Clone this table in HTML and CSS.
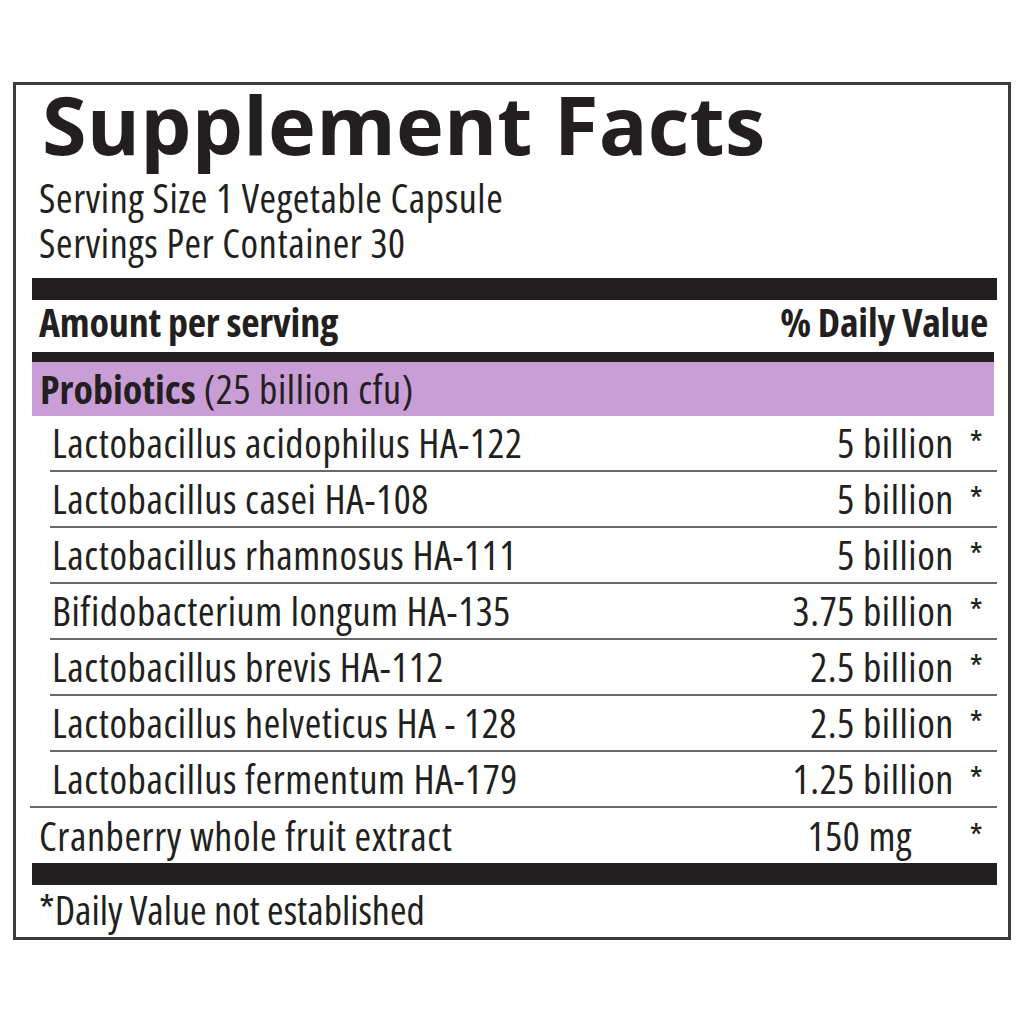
FILE: index.html
```html
<!DOCTYPE html>
<html lang="en">
<head>
<meta charset="utf-8">
<title>Supplement Facts</title>
<link rel="stylesheet" href="styles.css">
</head>
<body>
<section class="facts">
  <h1 class="title">Supplement Facts</h1>
  <div class="serving">
    <div>Serving Size 1 Vegetable Capsule</div>
    <div>Servings Per Container 30</div>
  </div>
  <div class="bar bar-thick"></div>
  <div class="head">
    <span>Amount per serving</span>
    <span>% Daily Value</span>
  </div>
  <div class="bar bar-mid"></div>
  <div class="group"><b>Probiotics</b> (25 billion cfu)</div>
  <div class="rows">
    <div class="row sub"><span class="name">Lactobacillus acidophilus HA-122</span><span class="amt">5 billion</span><span class="star">*</span></div>
    <div class="row sub"><span class="name">Lactobacillus casei HA-108</span><span class="amt">5 billion</span><span class="star">*</span></div>
    <div class="row sub"><span class="name">Lactobacillus rhamnosus HA-111</span><span class="amt">5 billion</span><span class="star">*</span></div>
    <div class="row sub"><span class="name">Bifidobacterium longum HA-135</span><span class="amt">3.75 billion</span><span class="star">*</span></div>
    <div class="row sub"><span class="name">Lactobacillus brevis HA-112</span><span class="amt">2.5 billion</span><span class="star">*</span></div>
    <div class="row sub"><span class="name">Lactobacillus helveticus HA - 128</span><span class="amt">2.5 billion</span><span class="star">*</span></div>
    <div class="row sub last-sub"><span class="name">Lactobacillus fermentum HA-179</span><span class="amt">1.25 billion</span><span class="star">*</span></div>
    <div class="row main"><span class="name">Cranberry whole fruit extract</span><span class="amt mg">150 mg</span><span class="star">*</span></div>
  </div>
  <div class="bar bar-thick"></div>
  <div class="foot">*Daily Value not established</div>
</section>
</body>
</html>
```
FILE: styles.css
```css
html, body {
  margin: 0;
  padding: 0;
  background: #ffffff;
}
body {
  padding: 82px 13px 0 13px;
  color: #231f20;
  font-family: "Open Sans", "Liberation Sans", sans-serif;
  font-stretch: 75%;
  font-size: 40px;
  letter-spacing: 0.6px;
}
.facts {
  width: 998px;
  height: 858px;
  box-sizing: border-box;
  border: 3px solid #3d3b3c;
  padding: 0 11px 0 16px;
  display: flex;
  flex-direction: column;
}
.title {
  margin: 0;
  padding-left: 10px;
  font-size: 81px;
  font-weight: 700;
  font-stretch: 100%;
  line-height: 78px;
  letter-spacing: 0.2px;
  height: 78px;
}
.serving {
  margin-top: 12px;
  padding-left: 7px;
  line-height: 45px;
}
.bar { background: #231f20; }
.bar-thick { height: 22px; }
.serving + .bar { margin-top: 13px; }
.bar-mid { height: 10px; margin-right: 3px; }
.head {
  height: 52px;
  line-height: 52px;
  display: flex;
  justify-content: space-between;
  padding: 0 9px 0 7px;
  font-weight: 700;
  letter-spacing: -0.2px;
  position: relative;
  top: -4px;
}
.group {
  background: #c99dd5;
  height: 54px;
  line-height: 54px;
  padding-left: 8px;
  margin-right: 3px;
}
.group b { font-weight: 700; letter-spacing: 0; }
.row {
  display: grid;
  grid-template-columns: 1fr auto 43px;
  align-items: center;
  height: 56px;
  line-height: 52px;
  box-sizing: border-box;
}
.row.sub {
  margin-left: 18px;
  padding-left: 2px;
  border-bottom: 2px solid #6a6a6a;
}
.row.sub.last-sub {
  margin-left: -2px;
  padding-left: 22px;
}
.row.main {
  height: 55px;
  padding-left: 7px;
}
.amt { text-align: right; }
.amt.mg { padding-right: 42px; }
.star {
  text-align: center;
  font-size: 34px;
  padding-left: 2px;
}
.foot {
  height: 52px;
  line-height: 50px;
  padding-left: 7px;
  letter-spacing: 0;
}
```
